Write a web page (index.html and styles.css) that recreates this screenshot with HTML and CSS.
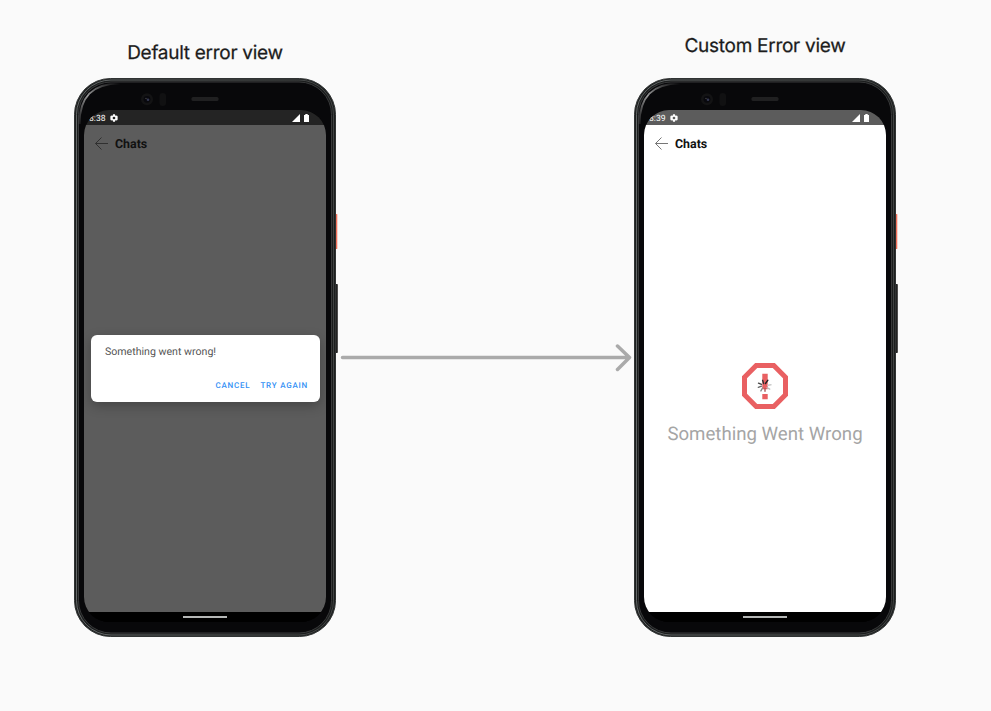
FILE: index.html
```html
<!DOCTYPE html>
<html lang="en">
<head>
<meta charset="utf-8">
<title>Error views</title>
<link rel="stylesheet" href="styles.css">
</head>
<body>
<svg class="defs" width="0" height="0">
  <defs>
    <linearGradient id="rim" x1="0" y1="0" x2="1" y2="0">
      <stop offset="0" stop-color="#777b7c"/><stop offset=".5" stop-color="#656969"/><stop offset="1" stop-color="#4a4c4c"/>
    </linearGradient>
    <linearGradient id="shine" x1="0" y1="1" x2="1" y2="0">
      <stop offset="0" stop-color="#777" stop-opacity=".2"/><stop offset=".45" stop-color="#999"/><stop offset="1" stop-color="#777" stop-opacity="0"/>
    </linearGradient>
    <symbol id="body" viewBox="0 0 264 559">
      <rect x="260.500" y="136" width="2.800" height="35" rx=".6" fill="#f2705a"/>
      <rect x="261" y="206" width="2.800" height="69" rx=".8" fill="#222"/>
      <rect x=".5" y=".5" width="261" height="558" rx="36" fill="#1c1e1e" stroke="#303333"/>
      <rect x="2.500" y="2" width="257" height="555" rx="34.500" fill="#1a1c1c" stroke="url(#rim)" stroke-width=".8"/>
      <rect x="4.500" y="4" width="253" height="551" rx="32.500" fill="#08080a" stroke="#38393a" stroke-width="1"/>
      <path d="M5.500 46C5.500 19 18 5.500 46 5.500" fill="none" stroke="url(#shine)" stroke-width="2"/>
      <circle cx="73" cy="21.300" r="6" fill="#131314"/><circle cx="73" cy="21.300" r="3.400" fill="#08080d"/>
      <circle cx="74" cy="21.800" r="1.300" fill="#353852"/><circle cx="72" cy="20.400" r=".6" fill="#555"/>
      <rect x="85.500" y="15" width="6.500" height="13" rx="3" fill="#111112"/>
      <rect x="117.500" y="19" width="27" height="4" rx="1.500" fill="#202021"/>
    </symbol>
    <symbol id="gear" viewBox="0 0 24 24">
      <path fill="#fff" fill-rule="evenodd" d="M9 1h6l.6 3.300 2 1.200L21 4.400l3 5.200-2.700 2.400L24 14.500l-3 5.100-3.400-1.100-2 1.200L15 23H9l-.6-3.300-2-1.200L3 19.600l-3-5.100L2.700 12 0 9.600l3-5.200 3.400 1.100 2-1.200zM12 8a4 4 0 1 0 0 8 4 4 0 0 0 0-8z"/>
    </symbol>
    <symbol id="signal" viewBox="0 0 18 10">
      <path fill="#fff" d="M0 9L8 1v8zM12 2h1.300V1h2.400v1H17v7h-5z"/>
    </symbol>
    <symbol id="back" viewBox="0 0 14 14">
      <path d="M14 6.500H1.500M7.500 .5L1.500 6.500l6 6" fill="none" stroke="currentColor" stroke-width="1"/>
    </symbol>
  </defs>
</svg>
<main class="board">
  <section class="column">
    <h1 class="title">Default error view</h1>
    <div class="phone">
      <svg class="phone-body"><use href="#body"/></svg>
      <div class="screen dimmed">
        <div class="status"><span class="time">8:38</span><svg class="gear"><use href="#gear"/></svg><svg class="signal"><use href="#signal"/></svg></div>
        <div class="app">
          <header class="bar"><svg class="back"><use href="#back"/></svg><h2 class="heading">Chats</h2></header>
          <div class="dialog">
            <p class="message">Something went wrong!</p>
            <div class="actions"><span class="cancel">CANCEL</span><span class="retry">TRY AGAIN</span></div>
          </div>
        </div>
        <div class="nav"><span class="pill"></span></div>
      </div>
    </div>
  </section>
  <svg class="arrow" viewBox="0 0 292 28"><path d="M2.500 13.500H289.500M277.500 2L289.500 13.500 277.500 25.500" fill="none" stroke="#aaa" stroke-width="3.500" stroke-linecap="round" stroke-linejoin="round"/></svg>
  <section class="column">
    <h1 class="title raised">Custom Error view</h1>
    <div class="phone">
      <svg class="phone-body"><use href="#body"/></svg>
      <div class="screen">
        <div class="status"><span class="time">8:39</span><svg class="gear"><use href="#gear"/></svg><svg class="signal"><use href="#signal"/></svg></div>
        <div class="app">
          <header class="bar"><svg class="back"><use href="#back"/></svg><h2 class="heading">Chats</h2></header>
          <div class="failure">
            <svg class="failure-icon" viewBox="0 0 48 48">
              <path d="M15.200 3.500H32.800L44.500 15.200V32.800L32.800 44.500H15.200L3.500 32.800V15.200z" fill="none" stroke="#e96062" stroke-width="5"/>
              <path d="M21.300 11.800h5.400v15.400h-5.400zM21.300 32h5.400v5.300h-5.400z" fill="#e96062"/>
              <g fill="none" stroke-width="1.400" stroke-linecap="round">
                <path d="M24.500 21.500l2.400-3.300" stroke="#222"/><path d="M22.600 21.500l-1-3.200" stroke="#333"/>
                <path d="M20.500 22.300l-3-1.100" stroke="#444"/><path d="M20.500 24.200l-3.200 1.100" stroke="#666"/>
                <path d="M21.500 26l-1.600 2.900" stroke="#888"/><path d="M24 26.600v2.600" stroke="#a55"/>
                <path d="M26 25.500l2.700 1.600" stroke="#bbb"/><path d="M27 23.300l3-.5" stroke="#ccc"/>
              </g>
            </svg>
            <p class="failure-text">Something Went Wrong</p>
          </div>
        </div>
        <div class="nav"><span class="pill"></span></div>
      </div>
    </div>
  </section>
</main>
</body>
</html>
```
FILE: styles.css
```css
* { box-sizing: border-box; }
body { margin: 0; background: #fafafa; font-family: Roboto, sans-serif; text-rendering: geometricPrecision; }
h1, h2, p { margin: 0; font-weight: 400; }
svg { display: block; flex: none; }
.defs { position: absolute; }
.board { width: 991px; height: 711px; display: flex; padding: 0 0 0 74px; overflow: hidden; }
.column { width: 262px; flex: none; }
.title { height: 78px; padding-top: 41px; line-height: 24px; font-family: "Inter", sans-serif; font-size: 19px; font-weight: 400; letter-spacing: -.28px; -webkit-text-stroke: .25px #1c1c1c; text-align: center; color: #1c1c1c; white-space: nowrap; }
.title.raised { padding-top: 34px; }
.phone { display: grid; width: 264px; height: 559px; }
.phone-body { grid-area: 1 / 1; width: 264px; height: 559px; }
.screen { grid-area: 1 / 1; z-index: 1; width: 242px; height: 512px; margin: 32px 0 0 10px; display: flex; flex-direction: column; border-radius: 25px; overflow: hidden; background: #000; }
.status { height: 15px; flex: none; display: flex; align-items: center; padding: 1px 16px 0 5px; background: #5c5c5c; color: #fff; }
.dimmed .status { background: #242424; }
.time { width: 21px; font-size: 8.6px; line-height: 15px; padding-top: 2px; }
.gear { width: 8px; height: 8px; }
.signal { width: 18px; height: 10px; margin-left: auto; }
.app { height: 487px; flex: none; background: #fff; color: #111; }
.dimmed .app { background: #5c5c5c; }
.bar { height: 37px; display: flex; align-items: center; padding-left: 10px; color: #777; }
.dimmed .bar { color: #303030; }
.back { width: 14px; height: 14px; margin-right: 7px; }
.heading { font-size: 12.4px; line-height: 16px; font-weight: 700; color: #111; padding-top: 3px; }
.dialog { width: 229.5px; height: 67px; margin: 173px 0 0 6.500px; padding: 9px 12px 0 14.500px; background: #fff; border-radius: 6px; box-shadow: 0 4px 12px rgba(0,0,0,.25); }
.message { font-size: 10.600px; line-height: 15px; color: #555; }
.actions { display: flex; justify-content: flex-end; gap: 10px; margin-top: 20px; line-height: 13px; font-size: 8px; font-weight: 500; letter-spacing: .78px; color: #3290f5; }
.nav { height: 10px; flex: none; display: flex; justify-content: center; padding-top: 4px; background: #000; }
.pill { width: 44px; height: 2px; background: #b4b6b5; }
.arrow { width: 292px; height: 28px; margin: 344px 2px 0 4px; }
.failure { display: flex; flex-direction: column; align-items: center; padding-top: 200px; }
.failure-icon { width: 48px; height: 48px; }
.failure-text { margin-top: 12px; font-size: 18.650px; line-height: 24px; color: #a5a5a5; white-space: nowrap; }
```
